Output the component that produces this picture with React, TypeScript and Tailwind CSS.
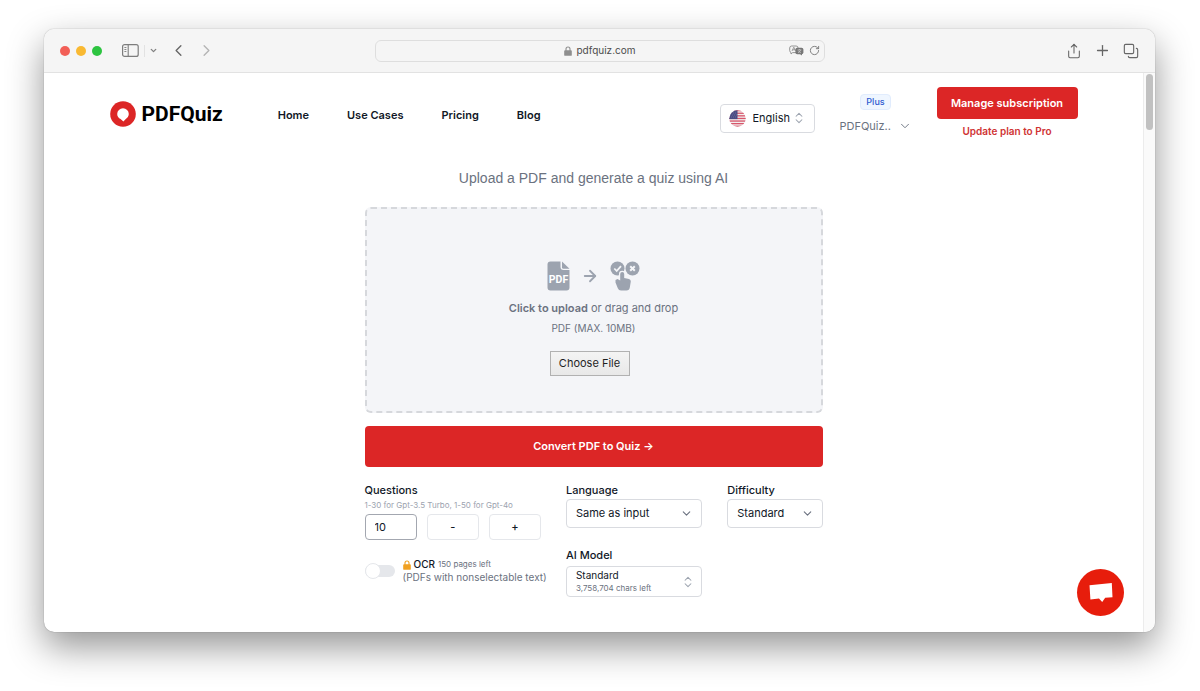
import { useRef, useState } from "react";
import { ArrowRight, ChevronDown, ChevronLeft, ChevronRight, ChevronsUpDown, Copy, Plus, RotateCw, Share } from "lucide-react";

function SidebarIcon() {
  return (
    <svg width="17" height="13" viewBox="0 0 17 13" fill="none" stroke="#7d7d7d">
      <rect x="0.6" y="0.6" width="15.6" height="11.8" rx="2" strokeWidth="1.2" />
      <path d="M6.2 1v11" strokeWidth="1.1" />
      <path d="M2.4 3.5h2M2.4 5.5h2M2.4 7.5h2" strokeWidth="0.9" />
    </svg>
  );
}

function LockIcon({ className }: { className: string }) {
  return (
    <svg viewBox="0 0 8 10" className={className}>
      <path d="M2 5V3a2 2 0 0 1 4 0v2" fill="none" stroke="currentColor" strokeWidth="1.1" />
      <rect x="0.2" y="4.2" width="7.6" height="5.6" rx="0.9" fill="currentColor" />
    </svg>
  );
}

function TranslateIcon() {
  return (
    <svg width="15" height="11" viewBox="0 0 15 11">
      <path d="M2.5 1h4.6a2 2 0 0 1 2 2v2.6a2 2 0 0 1-2 2H3.6L2 9V7.4A1.8 1.8 0 0 1 .7 5.6V3a2 2 0 0 1 1.8-2z" fill="none" stroke="#8a8a8a" strokeWidth="0.9" />
      <path d="M3 6l1.8-3.8L6.6 6M3.6 4.8h2.4" fill="none" stroke="#8a8a8a" strokeWidth="0.8" />
      <rect x="6.4" y="2.8" width="8" height="6.4" rx="1.8" fill="#777" />
      <path d="M11 9l2 1.6V8.6z" fill="#777" />
      <path d="M8.6 4.9h3.8M10.5 4.1v.8M9 7.8c1.4-.6 2.3-1.5 2.6-2.9M9.4 5.6c.6 1.2 1.4 1.8 2.5 2.2" fill="none" stroke="#ddd" strokeWidth="0.6" />
    </svg>
  );
}

function LogoMark() {
  return (
    <svg width="26" height="26" viewBox="0 0 26 26">
      <circle cx="13" cy="13" r="12.8" fill="#dc2626" />
      <path d="M13 7.2a5.8 5.8 0 0 1 5.8 5.8c0 2.4-1.5 3.8-2.8 4.8L13.4 20.600 10.600 18C8.600 17 7.200 15.400 7.200 13a5.800 5.800 0 0 1 5.800-5.800z" fill="#fff" />
    </svg>
  );
}

function UsFlag() {
  return (
    <svg width="17" height="17" viewBox="0 0 17 17">
      <clipPath id="flag-circle">
        <circle cx="8.5" cy="8.5" r="8.2" />
      </clipPath>
      <g clipPath="url(#flag-circle)">
        <rect width="17" height="17" fill="#f2eeee" />
        {[0, 1, 2, 3, 4, 5, 6].map((n) => (
          <rect key={n} y={n * 2.6} width="17" height="1.3" fill="#d8556a" />
        ))}
        <rect width="8.5" height="9.1" fill="#4c4c84" />
        <path d="M2 3h6M1 5h7M2 7h6" stroke="#8c8cb4" strokeWidth="0.6" strokeDasharray="0.8 1.2" />
      </g>
    </svg>
  );
}

function PdfIcon() {
  return (
    <svg width="23" height="30" viewBox="0 0 23 30">
      <path d="M3.5 0.5H13.5V6a3 3 0 0 0 3 3H22.5V26.5a3 3 0 0 1-3 3H3.5a3 3 0 0 1-3-3V3.5a3 3 0 0 1 3-3z" fill="#9ca3af" />
      <path d="M15 0.5l7.5 7.3H16.5a1.500 1.500 0 0 1-1.500-1.500z" fill="#9ca3af" />
      <text x="11.5" y="22" textAnchor="middle" fontFamily="Roboto, sans-serif" fontWeight="700" fontSize="10.5" fill="#fff">PDF</text>
    </svg>
  );
}

function QuizIcon() {
  return (
    <svg width="30" height="30" viewBox="0 0 30 30">
      <circle cx="7.5" cy="7.5" r="7" fill="#9ca3af" />
      <circle cx="22.5" cy="7.5" r="7" fill="#9ca3af" />
      <path d="M4.3 7.5l2.4 2.5 4.3-4.8" fill="none" stroke="#f4f5f8" strokeWidth="1.8" />
      <path d="M20.2 5.2l4.6 4.6M24.8 5.2l-4.6 4.6" stroke="#f4f5f8" strokeWidth="2" />
      <path d="M10.2 13a2 2 0 0 1 4 0v4l4.8 1a2.5 2.5 0 0 1 1.8 2.6L19.8 26.5a3.5 3.5 0 0 1-3.4 3H11a3.5 3.5 0 0 1-3.2-2.2L5.5 21.5v-2.5l2-1 2.700 1.500z" fill="#9ca3af" stroke="#f4f5f8" strokeWidth="2.5" paintOrder="stroke" />
    </svg>
  );
}

function Toolbar() {
  return (
    <div className="grid h-11 shrink-0 grid-cols-[1fr_minmax(200px,450px)_1fr] items-center border-b border-[#e2e2e2] bg-[#f5f5f5] px-4">
      <div className="flex items-center">
        <div className="flex gap-[6px]">
          <span className="size-[10px] rounded-full bg-[#f25f57]" />
          <span className="size-[10px] rounded-full bg-[#f9b932]" />
          <span className="size-[10px] rounded-full bg-[#2dc440]" />
        </div>
        <button aria-label="Toggle sidebar" className="ml-5"><SidebarIcon /></button>
        <span className="ml-[5px] h-3 w-px bg-[#e2e2e2]" />
        <button aria-label="Sidebar options" className="ml-1"><ChevronDown size={9} strokeWidth={3.5} color="#808080" /></button>
        <button aria-label="Back" className="ml-[11px]"><ChevronLeft size={19} strokeWidth={1.7} color="#666" /></button>
        <button aria-label="Forward" className="ml-[9px]"><ChevronRight size={19} strokeWidth={1.7} color="#b4b4b4" /></button>
      </div>
      <div className="grid h-[22px] grid-cols-[1fr_auto_1fr] items-center rounded-md border border-[#dedede] px-1">
        <span />
        <div className="flex items-center gap-[5px] text-[10px] text-[#4c4c4c]">
          <LockIcon className="h-[10px] w-2 text-[#8e8e8e]" />
          pdfquiz.com
        </div>
        <div className="flex items-center justify-end gap-[5px]">
          <button aria-label="Translate"><TranslateIcon /></button>
          <button aria-label="Reload"><RotateCw size={11} strokeWidth={2} color="#777" /></button>
        </div>
      </div>
      <div className="flex items-center justify-end gap-3 text-[#666]">
        <button aria-label="Share"><Share size={16} strokeWidth={1.6} /></button>
        <button aria-label="New tab"><Plus size={17} strokeWidth={1.8} /></button>
        <button aria-label="Tab overview"><Copy size={16} strokeWidth={1.7} className="-scale-100" /></button>
      </div>
    </div>
  );
}

function Header() {
  return (
    <header className="mx-auto flex h-[82px] w-full max-w-[968px] items-center justify-between">
      <div className="flex items-center">
        <a href="#home" className="flex items-center gap-[6px]">
          <LogoMark />
          <span className="font-['Roboto',sans-serif] text-[21px] leading-6 font-bold text-black">PDFQuiz</span>
        </a>
        <nav className="ml-[55px] flex gap-[38px] pt-[3px] text-[11px] font-semibold text-[#111827]">
          <a href="#home">Home</a>
          <a href="#use-cases">Use Cases</a>
          <a href="#pricing">Pricing</a>
          <a href="#blog">Blog</a>
        </nav>
      </div>
      <div className="flex items-center gap-[25px]">
        <div className="mt-2 grid h-[29px] w-[95px] items-center rounded-[4px] border border-[#d9dbe0]">
          <span className="pointer-events-none col-start-1 row-start-1 flex items-center justify-between px-2">
            <UsFlag />
            <ChevronsUpDown size={14} strokeWidth={1.8} color="#9ca3af" />
          </span>
          <select aria-label="Site language" className="col-start-1 row-start-1 h-full w-full appearance-none bg-transparent pl-8 text-[11px] text-[#111827]">
            <option>English</option>
          </select>
        </div>
        <div className="flex w-[72px] flex-col items-center gap-2">
          <span className="rounded-[4px] border border-[#e1ecfd] bg-[#eff6ff] px-[5px] text-[9px] leading-[14px] font-medium text-[#2f5bd0]">Plus</span>
          <button className="flex w-full items-center justify-between text-[11px] leading-4 text-[#6b7280]">
            PDFQuiz..
            <ChevronDown size={14} strokeWidth={1.6} />
          </button>
        </div>
        <div className="flex w-[141px] flex-col items-center gap-1 pb-[2px]">
          <button className="h-8 w-full rounded-[4px] bg-[#dc2626] text-[11px] font-semibold text-white">Manage subscription</button>
          <a href="#upgrade" className="text-[10px] leading-4 font-semibold text-[#cf3333]">Update plan to Pro</a>
        </div>
      </div>
    </header>
  );
}

function Dropzone() {
  const file = useRef<HTMLInputElement>(null);
  return (
    <div className="mt-[19px] flex h-[206px] flex-col items-center rounded-md border-2 border-dashed border-[#d6d8dc] bg-[#f4f5f8] pt-[52px] text-[#6b7280]">
      <div className="flex items-center">
        <PdfIcon />
        <ArrowRight size={18} strokeWidth={2.4} color="#9ca3af" className="mx-[11px]" />
        <QuizIcon />
      </div>
      <p className="mt-[7px] text-[11px] leading-5"><span className="font-semibold">Click to upload</span> or drag and drop</p>
      <p className="mt-[2px] text-[10px] leading-4">PDF (MAX. 10MB)</p>
      <input ref={file} type="file" accept="application/pdf" aria-label="PDF file" className="hidden" />
      <button
        type="button"
        onClick={() => file.current?.click()}
        className="mt-[15px] mr-2 h-[25px] w-20 border border-[#b1b1b1] bg-linear-to-b from-[#f4f4f4] to-[#e8e8e8] text-[11px] text-[#1f1f1f]"
      >
        Choose File
      </button>
    </div>
  );
}

function SelectField({ id, label, value }: { id: string; label: string; value: string }) {
  return (
    <div>
      <label htmlFor={id} className="block text-[11px] leading-4 font-medium text-[#111827]">{label}</label>
      <div className="mt-px grid h-[29px] items-center rounded-[4px] border border-[#d9dbe0]">
        <ChevronDown size={13} strokeWidth={2} color="#6b7280" className="pointer-events-none col-start-1 row-start-1 mr-2 justify-self-end" />
        <select id={id} className="col-start-1 row-start-1 h-full w-full appearance-none bg-transparent pl-[9px] text-[11px] text-[#111827]">
          <option>{value}</option>
        </select>
      </div>
    </div>
  );
}

function Options() {
  const [count, setCount] = useState(10);
  const [ocr, setOcr] = useState(false);
  return (
    <div className="mt-[15px] grid grid-cols-[minmax(0,176fr)_minmax(0,136fr)_minmax(0,95fr)] gap-[25px]">
      <div>
        <label htmlFor="questions" className="block text-[11px] leading-4 font-medium text-[#111827]">Questions</label>
        <p className="text-[8px] leading-[14px] whitespace-nowrap text-[#9ca3af]">1-30 for Gpt-3.5 Turbo, 1-50 for Gpt-4o</p>
        <div className="mt-[2px] grid h-[26px] grid-cols-3 gap-[10px] text-[11px] text-[#111827]">
          <input
            id="questions"
            inputMode="numeric"
            value={count}
            onChange={(e) => setCount(Number(e.target.value) || 0)}
            className="w-full rounded-[4px] border border-[#a3a7b0] pl-[9px]"
          />
          <button aria-label="Fewer questions" onClick={() => setCount(count - 1)} className="rounded-[4px] border border-[#e5e7eb] font-medium">-</button>
          <button aria-label="More questions" onClick={() => setCount(count + 1)} className="rounded-[4px] border border-[#e5e7eb] font-medium">+</button>
        </div>
        <label className="mt-[18px] flex items-center gap-2">
          <input type="checkbox" checked={ocr} onChange={() => setOcr(!ocr)} className="peer sr-only" />
          <span className="flex h-3 w-[30px] shrink-0 items-center rounded-full bg-[#e5e7eb] peer-checked:justify-end peer-checked:bg-[#dc2626]">
            <span className="size-4 shrink-0 rounded-full border border-[#e5e7eb] bg-white" />
          </span>
          <span className="block whitespace-nowrap">
            <span className="flex items-center gap-[3px] text-[10px] leading-[13px] font-medium text-[#111827]">
              <LockIcon className="h-[10px] w-2 text-[#f0a020]" />
              OCR
              <span className="text-[8px] font-normal text-[#6b7280]">150 pages left</span>
            </span>
            <span className="block text-[10px] leading-[13px] text-[#6b7280]">(PDFs with nonselectable text)</span>
          </span>
        </label>
      </div>
      <div>
        <SelectField id="language" label="Language" value="Same as input" />
        <div className="mt-[19px]">
          <span id="model-label" className="block text-[11px] leading-4 font-medium text-[#111827]">AI Model</span>
          <button aria-labelledby="model-label model-value" aria-haspopup="listbox" className="mt-[3px] flex h-[31px] w-full items-center justify-between rounded-[4px] border border-[#d9dbe0] pr-[6px] pl-[9px] text-left">
            <span id="model-value">
              <span className="block text-[10px] leading-[13px] text-[#111827]">Standard</span>
              <span className="block text-[8px] leading-[12px] text-[#6b7280]">3,758,704 chars left</span>
            </span>
            <ChevronsUpDown size={14} strokeWidth={1.8} color="#9ca3af" />
          </button>
        </div>
      </div>
      <SelectField id="difficulty" label="Difficulty" value="Standard" />
    </div>
  );
}

export default function App() {
  return (
    <div className="flex min-h-screen flex-col bg-white pt-[29px] pr-[45px] pb-[59px] pl-11 font-['Inter',sans-serif]">
      <div className="relative flex flex-1 flex-col overflow-hidden rounded-[10px] bg-white shadow-[0_0_1px_rgba(0,0,0,0.5),0_15px_36px_rgba(0,0,0,0.42)]">
        <Toolbar />
        <div className="flex flex-1">
          <div className="flex-1">
            <Header />
            <main className="mx-auto w-full max-w-[458px] pt-[13px]">
              <h1 className="text-center font-['Liberation_Sans',sans-serif] text-[14px] leading-[20px] text-[#6b7280]">Upload a PDF and generate a quiz using AI</h1>
              <Dropzone />
              <button className="mt-[13px] h-[41px] w-full rounded-[4px] bg-[#dc2626] text-[11px] font-semibold text-white">Convert PDF to Quiz →</button>
              <Options />
            </main>
          </div>
          <div className="w-3 border-l border-[#ececec] bg-[#fafafa] pt-px pl-[2px]">
            <div className="h-14 w-[7px] rounded-full bg-[#c1c1c1]" />
          </div>
        </div>
        <button aria-label="Open chat" className="absolute right-[31px] bottom-4 flex size-[47px] items-center justify-center rounded-full bg-[#e71d0c]">
          <svg width="24" height="22" viewBox="0 0 24 22">
            <path d="M0.5 3.2L22.8 1l.7 14.2-7.3.6-3 4.2-3.2-3.400-8.600.9z" fill="#fff" />
          </svg>
        </button>
      </div>
    </div>
  );
}
